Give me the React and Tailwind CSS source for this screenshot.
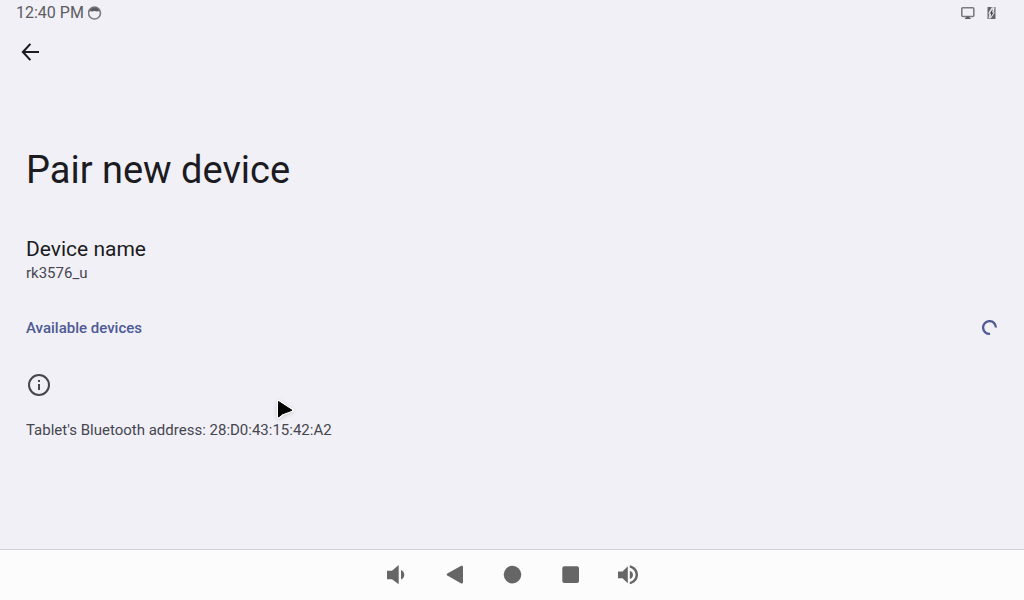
import { useState } from 'react';
import { clsx } from 'clsx';

const DEVICE_NAME = 'rk3576_u';
const BT_ADDRESS = '28:D0:43:15:42:A2';

const NAV_ITEMS = [
  {
    id: 'volume-down',
    label: 'Volume down',
    icon: <path d="M3 7.700v8.600h5l6.700 5V2L8 7.700H3zm14-.7v9.600c2-.8 3.300-2.600 3.300-4.800S19 7.800 17 7z" />,
  },
  {
    id: 'back',
    label: 'Back',
    icon: <path d="M5.300 10.600 18.800 2.900c1-.5 2.200 0 2.200 1.100v15.200c0 1.100-1.200 1.600-2.200 1.100L5.300 12.600c-.8-.5-.8-1.500 0-2z" />,
  },
  { id: 'home', label: 'Home', icon: <circle cx="12.500" cy="11.600" r="8.800" /> },
  { id: 'recents', label: 'Recent apps', icon: <rect x="4.300" y="3.300" width="16.700" height="16.700" rx="2" /> },
  {
    id: 'volume-up',
    label: 'Volume up',
    icon: (
      <path d="M2 8.500v6.800h4.500l5.300 5V3.300L6.500 8.500H2zm11.800-.7v8.200c1.900-.7 3.200-2.200 3.200-4.100s-1.300-3.400-3.200-4.100zm0-5.500v2.400c3.300.7 5.700 3.600 5.700 7.100s-2.400 6.400-5.700 7.100v2.400c4.600-.8 8.200-4.700 8.200-9.500s-3.600-8.700-8.200-9.500z" />
    ),
  },
];

function StatusBar() {
  return (
    <div className="flex h-6 items-center justify-between pt-0.5 pl-4 pr-7 text-[#5c5c61]">
      <div className="flex items-center gap-1">
        <span className="text-base leading-5">12:40 PM</span>
        <svg viewBox="0 0 14 14" className="size-3.5" aria-hidden="true">
          <circle cx="6.500" cy="7" r="6" fill="none" stroke="#7b7b80" strokeWidth="1.600" />
          <path
            d="M1.500 6.500C1.500 3.500 3.500 1.500 6.500 1.500s5 2 5 5L10.500 5 9 5.600 6.500 4.900 4 5.600 2.500 5z"
            fill="#5c5c61"
          />
        </svg>
      </div>
      <div className="flex items-center gap-3">
        <svg viewBox="0 0 14 14" className="size-3.5" aria-hidden="true">
          <rect x=".8" y="1.800" width="12" height="8.700" rx="1" fill="none" stroke="#7b7b80" strokeWidth="1.600" />
          <path d="M5.200 10.500h3.200v1.200h1.200V13H4v-1.300h1.200z" fill="#5c5c61" />
        </svg>
        <svg viewBox="0 0 9 14" className="h-3.5 w-[9px]" aria-hidden="true">
          <path d="M.5 1h8v12h-8z" fill="#65656a" />
          <path d="M4.800 1.200 1 7.500h1.200L1.500 12.500h2.200l4.300-6.200H6.900l.8-5.100z" fill="#e4e3ea" />
          <path d="M5.700 3 2.800 7.400h1.500L3.500 11l3-4.400H5z" fill="#3c3c40" />
        </svg>
      </div>
    </div>
  );
}

function Spinner() {
  return (
    <svg viewBox="0 0 16 16" className="size-4" role="img" aria-label="Searching">
      <path d="M13.900 7.400A6.400 6.400 0 1 0 8 13.900" fill="none" stroke="#4d5a94" strokeWidth="2.300" />
    </svg>
  );
}

function Pointer() {
  return (
    <svg
      viewBox="0 0 20 24"
      className="pointer-events-none absolute top-[398px] left-[275px] h-6 w-5 drop-shadow-sm"
      aria-hidden="true"
    >
      <path d="M3.500 3.500v15.500l4-3.200 9.500-3.500z" fill="#fff" stroke="#fff" strokeWidth="3" strokeLinejoin="round" />
      <path d="M3.500 3.500v15.500l4-3.200 9.500-3.500z" fill="#000" stroke="#000" strokeWidth="1" strokeLinejoin="round" />
    </svg>
  );
}

function NavBar({ active, onPress }) {
  return (
    <nav className="flex h-[51px] items-center justify-center gap-[34px] border-t border-[#d2d1d9] bg-[#fcfcfc]">
      {NAV_ITEMS.map((item) => (
        <button
          key={item.id}
          type="button"
          aria-label={item.label}
          onClick={() => onPress(item.id)}
          className={clsx('size-6', active === item.id ? 'text-black' : 'text-[#666666]')}
        >
          <svg viewBox="0 0 24 24" className="size-6" fill="currentColor">
            {item.icon}
          </svg>
        </button>
      ))}
    </nav>
  );
}

function App() {
  const [active, setActive] = useState(null);

  return (
    <div className="relative flex min-h-screen flex-col bg-[#f1f0f7] font-['Roboto',sans-serif] text-[#1b1b21]">
      <StatusBar />

      <header className="px-[18px] pt-4">
        <button type="button" aria-label="Navigate up" className="block size-6">
          <svg viewBox="0 0 24 24" className="size-6" fill="none" stroke="currentColor" strokeWidth="2.100">
            <path d="M12.400 3.900 4.900 12l7.500 8.100M5 12h16" />
          </svg>
        </button>
      </header>

      <main className="flex-1 px-[26px] pt-[82px]">
        <h1 className="text-[38px] leading-[48px]">Pair new device</h1>

        <section className="pt-[41px]">
          <h2 className="text-[21px] leading-7">Device name</h2>
          <p className="text-[15px] leading-5 text-[#46464f]">{DEVICE_NAME}</p>
        </section>

        <div className="flex items-center justify-between pt-[35px]">
          <h2 className="text-[15px] leading-5 font-medium text-[#4d5a94]">Available devices</h2>
          <Spinner />
        </div>

        <footer className="pt-[35px] text-[#46464f]">
          <svg viewBox="0 0 24 24" className="ml-px size-6" fill="currentColor" aria-hidden="true">
            <path d="M11 7h2v2h-2zm0 4h2v6h-2zm1-10a11 11 0 1 0 0 22 11 11 0 0 0 0-22zm0 20a9 9 0 1 1 0-18 9 9 0 0 1 0 18z" />
          </svg>
          <p className="pt-[23px] text-[15px] leading-5">Tablet's Bluetooth address: {BT_ADDRESS}</p>
        </footer>
      </main>

      <NavBar active={active} onPress={setActive} />
      <Pointer />
    </div>
  );
}

export default App;
